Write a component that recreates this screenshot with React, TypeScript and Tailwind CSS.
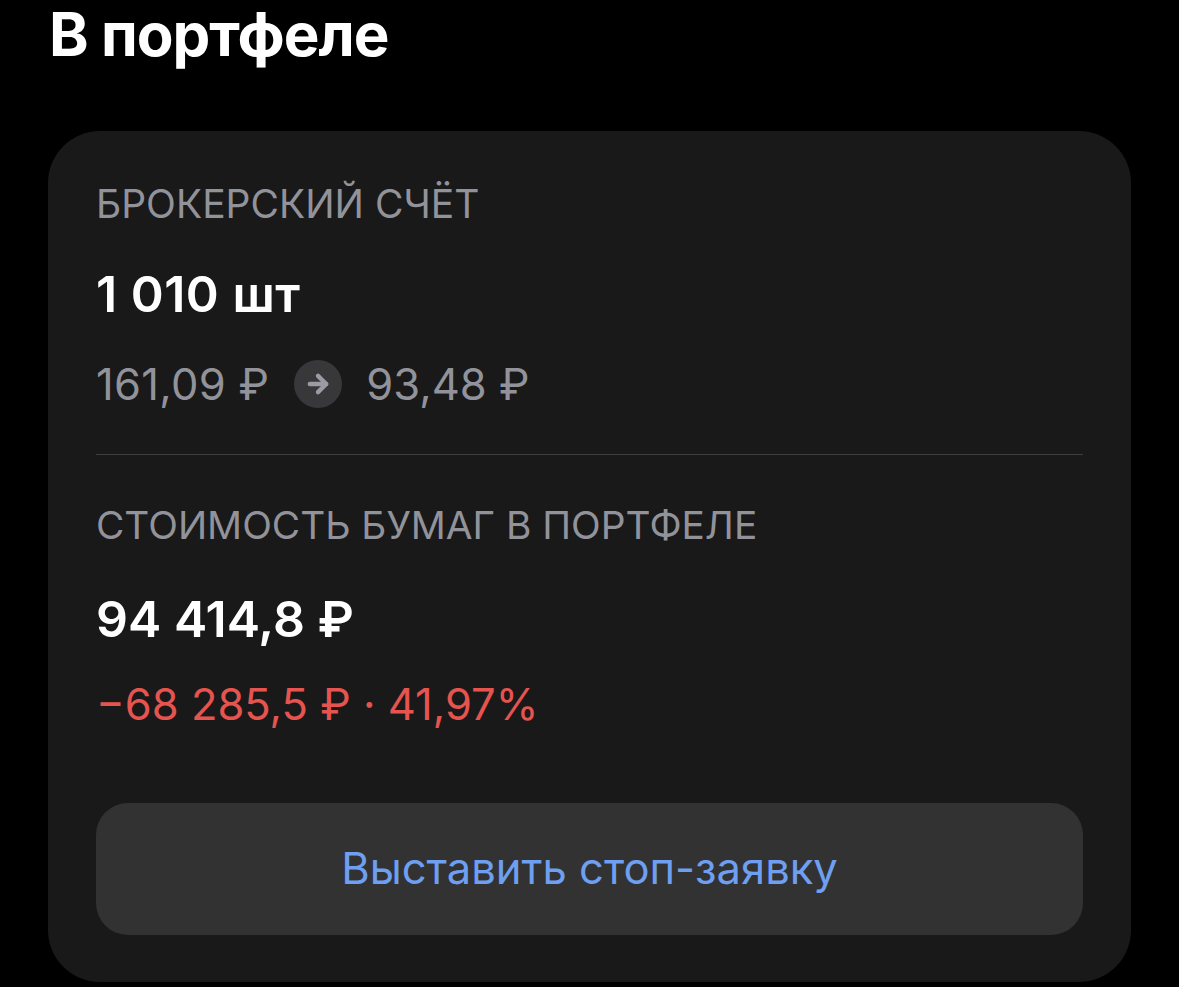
import { ArrowRight } from "lucide-react";

const font = "font-['Inter','Liberation_Sans',sans-serif]";

export default function App() {
  return (
    <div className={`h-[987px] w-[1179px] overflow-hidden bg-black text-white ${font}`}>
      <h1 className="ml-[49px] text-[60px] font-bold leading-[68px] tracking-[-1px]">В портфеле</h1>
      <div className="ml-[48px] mt-[63px] h-[851px] w-[1083px] rounded-[52px] bg-[#191919] px-[48px] pt-[52px]">
        <div className="text-[39px] leading-[42px] text-[#92939a]">БРОКЕРСКИЙ СЧЁТ</div>
        <div className="mt-[41px] text-[50px] font-semibold leading-[56px] tracking-[0.5px]">1 010 шт</div>
        <div className="mt-[37px] flex items-center text-[43.5px] leading-[50px] text-[#92939a]">
          <span className="tracking-[0.3px]">161,09 ₽</span>
          <span className="ml-[25px] mr-[24px] flex h-[48px] w-[48px] items-center justify-center rounded-full bg-[#38383a]">
            <ArrowRight size={28} strokeWidth={3.75} className="text-[#9a9ba3]" />
          </span>
          <span>93,48 ₽</span>
        </div>
        <div className="mt-[45px] h-px bg-[#3f3f41]" />
        <div className="mt-[49px] text-[38.8px] leading-[42px] text-[#92939a]">СТОИМОСТЬ БУМАГ В ПОРТФЕЛЕ</div>
        <div className="mt-[45px] text-[50px] font-semibold leading-[56px]">94 414,8 ₽</div>
        <div className="mt-[32px] text-[43.5px] leading-[50px] text-[#e5544f]">−68 285,5 ₽ · 41,97%</div>
        <button className="mt-[74px] flex h-[132px] w-full items-center justify-center rounded-[32px] bg-[#323232] text-[43.5px] text-[#6e9ff0]">
          Выставить стоп-заявку
        </button>
      </div>
    </div>
  );
}
